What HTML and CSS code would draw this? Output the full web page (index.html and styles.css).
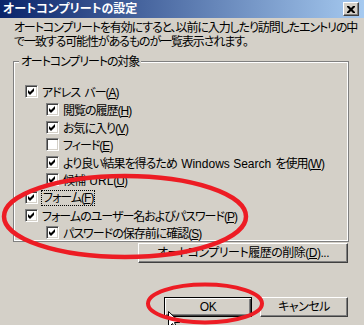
FILE: index.html
```html
<!DOCTYPE html>
<html lang="ja">
<head>
    <meta charset="UTF-8">
    <title>オートコンプリートの設定</title>
    <link rel="stylesheet" href="styles.css">
</head>
<body>
    <div class="dialog">
        <div class="titlebar">
            <span class="title">オートコンプリートの設定</span>
            <span class="close">
                <svg width="8" height="7" viewBox="0 0 8 7"><path d="M0 0h2l2 2 2-2h2v1l-2.5 2.5L8 6v1H6L4 5 2 7H0V6l2.5-2.5L0 1z" fill="#000"/></svg>
            </span>
        </div>
        <div class="content">
            <p class="intro">オートコンプリートを有効にすると、以前に入力したり訪問したエントリの中<br>で一致する可能性があるものが一覧表示されます。</p>

            <div class="group">
                <span class="legend">オートコンプリートの対象</span>
                <div class="rows">
                    <label class="row"><span class="box checked"></span><span>アドレス バー(<u>A</u>)</span></label>
                    <label class="row sub"><span class="box checked"></span><span>閲覧の履歴(<u>H</u>)</span></label>
                    <label class="row sub"><span class="box checked"></span><span>お気に入り(<u>V</u>)</span></label>
                    <label class="row sub"><span class="box"></span><span>フィード(<u>E</u>)</span></label>
                    <label class="row sub"><span class="box checked"></span><span>より良い結果を得るため <span class="latin">Windows Search</span> を使用(<u>W</u>)</span></label>
                    <label class="row sub"><span class="box checked"></span><span>候補 <span class="latin">URL</span>(<u>U</u>)</span></label>
                    <label class="row"><span class="box checked"></span><span class="focus">フォーム(<u>F</u>)</span></label>
                    <label class="row"><span class="box checked"></span><span>フォームのユーザー名およびパスワード(<u>P</u>)</span></label>
                    <label class="row sub"><span class="box checked"></span><span>パスワードの保存前に確認(<u>S</u>)</span></label>
                </div>
            </div>

            <div class="delete-line">
                <button class="btn btn-wide">オートコンプリート履歴の削除(<u>D</u>)...</button>
            </div>

            <div class="actions">
                <button class="btn btn-default">OK</button>
                <button class="btn">キャンセル</button>
            </div>
        </div>
    </div>

    <!-- 赤い丸の書き込みとマウスカーソル -->
    <svg class="marks" width="364" height="325" viewBox="0 0 364 325">
        <path d="M168.5 311.5v16l4-4 3 7 2-1-3-7h5.5z" fill="#fff" stroke="#000"/>
        <ellipse cx="125" cy="216.5" rx="121" ry="40.5" fill="none" stroke="#ed1c24" stroke-width="4.5"/>
        <ellipse cx="205" cy="303.5" rx="57" ry="19" fill="none" stroke="#ed1c24" stroke-width="4"/>
    </svg>
</body>
</html>
```

FILE: styles.css
```css
body {
    margin: 0;
    width: 364px;
    height: 325px;
    overflow: hidden;
    background-color: #d4d0c8;
    font-family: "Liberation Sans", "Noto Sans CJK JP", sans-serif;
    font-size: 12px;
    font-feature-settings: "palt";
    color: #000;
    position: relative;
}
.dialog {
    width: 364px;
    height: 325px;
}
.titlebar {
    height: 18px;
    display: flex;
    align-items: center;
    padding: 0 5px 0 3px;
    background: linear-gradient(to right, #0a246a, #a6caf0);
}
.title {
    color: #fff;
    font-weight: bold;
    line-height: 18px;
}
.close {
    margin-left: auto;
    width: 16px;
    height: 14px;
    box-sizing: border-box;
    display: flex;
    align-items: center;
    justify-content: center;
    background: #d4d0c8;
    border: 1px solid;
    border-color: #fff #404040 #404040 #fff;
    box-shadow: inset -1px -1px #808080;
}
.content {
    display: flex;
    flex-direction: column;
}
.intro {
    margin: 3px 0 0 14px;
    line-height: 14px;
    white-space: nowrap;
    letter-spacing: -1.1px;
}
.group {
    margin: 12px 15px 0 13px;
    height: 181px;
    box-sizing: border-box;
    border: 1px solid #808080;
    box-shadow: inset 1px 1px #fff, inset -1px -1px #fff;
    display: flex;
    flex-direction: column;
    align-items: flex-start;
}
.legend {
    margin: -7px 0 0 5px;
    padding: 0 2px;
    line-height: 14px;
    letter-spacing: -1.1px;
    background: #d4d0c8;
}
.rows {
    margin-top: 14.2px;
    padding-left: 11px;
}
.row {
    height: 17.6px;
    display: flex;
    align-items: center;
    white-space: nowrap;
    letter-spacing: -1px;
    word-spacing: 2px;
}
.row.sub {
    padding-left: 21px;
}
.latin {
    letter-spacing: 0;
    word-spacing: 0;
}
.box {
    width: 13px;
    height: 13px;
    flex: none;
    margin-right: 4px;
    box-sizing: border-box;
    background: #fff;
    border: 1px solid;
    border-color: #808080 #fff #fff #808080;
    box-shadow: inset 1px 1px #404040, inset -1px -1px #d4d0c8;
}
.box.checked {
    background: #fff url("data:image/svg+xml,%3Csvg xmlns='http://www.w3.org/2000/svg' width='11' height='11'%3E%3Cpath d='M2 4l2 2 4-4v3l-4 4-2-2z' fill='%23000'/%3E%3C/svg%3E") no-repeat 0 0;
}
.focus {
    outline: 1px dotted #000;
    outline-offset: 0;
    padding: 0 1px;
    line-height: 14px;
}
.delete-line {
    display: flex;
    justify-content: flex-end;
    margin: 1px 16px 0 0;
}
.btn {
    height: 20px;
    padding: 0;
    box-sizing: border-box;
    font: inherit;
    line-height: 18px;
    letter-spacing: -0.5px;
    color: #000;
    background: #d4d0c8;
    border: 1px solid;
    border-color: #fff #404040 #404040 #fff;
    box-shadow: inset -1px -1px #808080;
}
.btn-wide {
    width: 210px;
}
.actions {
    display: flex;
    justify-content: flex-end;
    gap: 8px;
    margin: 34px 16px 0 0;
}
.actions .btn {
    width: 88px;
}
.btn-default {
    border-color: #000;
    box-shadow: inset 1px 1px #fff, inset -1px -1px #404040, inset -2px -2px #808080;
}
.marks {
    position: absolute;
    top: 0;
    left: 0;
    pointer-events: none;
}
```
